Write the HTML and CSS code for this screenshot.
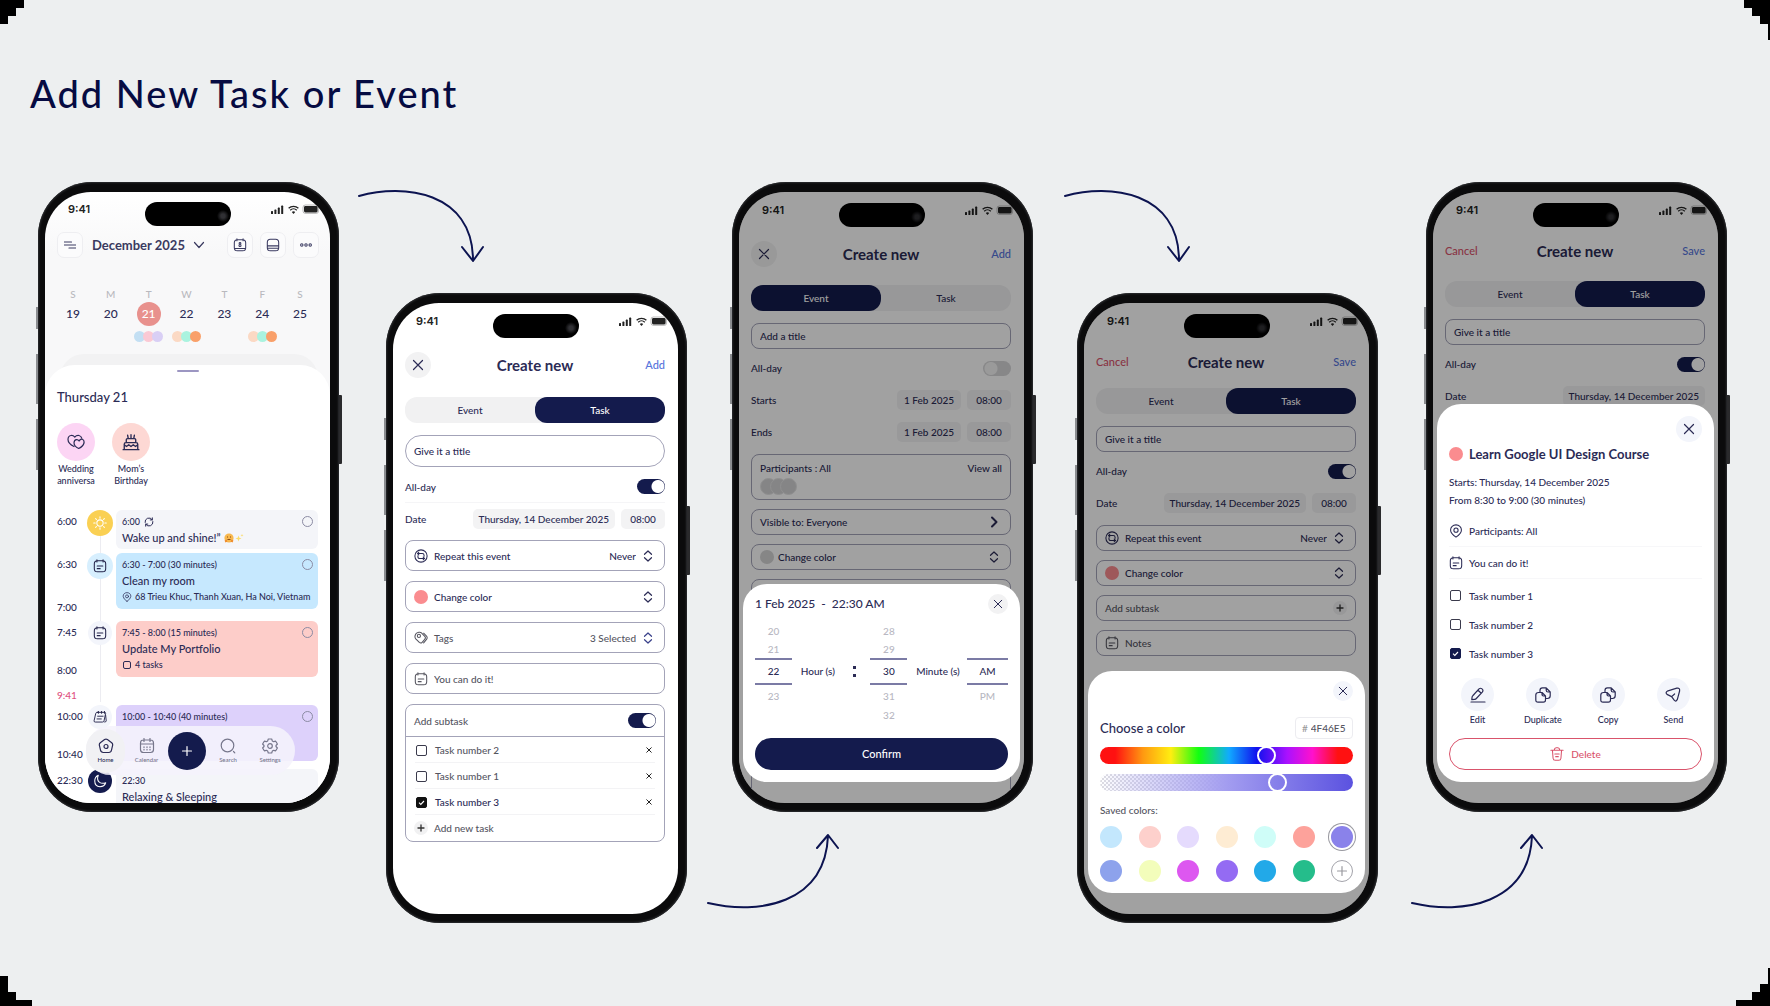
FILE: index.html
```html
<!DOCTYPE html>
<html lang="en">
<head>
<meta charset="utf-8">
<meta name="viewport" content="width=device-width, initial-scale=1">
<title>Add New Task or Event</title>
<link rel="stylesheet" href="styles.css">
</head>
<body>
<svg class="sprite" aria-hidden="true">
  <symbol id="i-status" viewBox="0 0 50 12"><g fill="currentColor"><rect x="0" y="8" width="2" height="3" rx=".6"/><rect x="3.4" y="6.6" width="2" height="4.4" rx=".6"/><rect x="6.8" y="4.6" width="2" height="6.4" rx=".6"/><rect x="10.2" y="2.6" width="2" height="8.4" rx=".6"/><rect x="33" y="3" width="13.6" height="6.4" rx="1.4"/><path d="M22.500 11l1.700-1.900a2.400 2.400 0 0 0-3.400 0z"/></g><g fill="none" stroke="currentColor"><path stroke-width="1.300" d="M17.600 5.300a7 7 0 0 1 9.800 0M19.200 7.300a4.700 4.700 0 0 1 6.600 0"/><rect x="32" y="2" width="15.600" height="8.400" rx="2.400" stroke-width=".6" opacity=".5"/></g></symbol>
  <symbol id="i-x" viewBox="0 0 12 12"><path d="M1.500 1.500l9 9m0-9l-9 9"/></symbol>
  <symbol id="i-plus" viewBox="0 0 12 12"><path d="M6 1.500v9M1.500 6h9"/></symbol>
  <symbol id="i-down" viewBox="0 0 12 12"><path d="M1.500 3.500L6 8.500l4.500-5"/></symbol>
  <symbol id="i-right" viewBox="0 0 12 12"><path d="M4 1.500L8.500 6 4 10.500"/></symbol>
  <symbol id="i-sort" viewBox="0 0 12 12"><path d="M2.500 4.300L6 1l3.500 3.300M2.500 7.700L6 11l3.500-3.300"/></symbol>
  <symbol id="i-note" viewBox="0 0 16 16"><path d="M5 2h6q3.500 0 3.500 3.500v5.500q0 3.500-3.500 3.500H5q-3.500 0-3.500-3.500V5.500Q1.500 2 5 2zM4.500.8v2.600M11.500.8v2.600M4.800 8h6.400M4.800 11h3.400"/></symbol>
  <symbol id="i-journal" viewBox="0 0 18 16"><path d="M5.500 2h9.500q1.500 0 1.200 1.500l-2 9.500q-.3 1.500-2 1.500H3Q1 14.500 1.400 12.800L3.500 3.500Q3.800 2 5.500 2zM7 .8v2.500M11 .8v2.500M14.800.8v2.500M6 7h7M5.200 10.500h5.500M16.300 6l.7 7q0 1.500-2 1.500"/></symbol>
  <symbol id="i-repeat" viewBox="0 0 16 16"><circle cx="8" cy="8" r="7"/><path d="M5.500 3.700L4 5.200l1.500 1.500M4 5.200h5.500q2 0 2 2v1M10.500 12.300l1.500-1.500-1.500-1.500M12 10.800H6.500q-2 0-2-2v-1"/></symbol>
  <symbol id="i-tag" viewBox="0 0 16 16"><path d="M2 3.500Q3 2 5.500 1.500q2-.4 3 .6l3.800 4q1.500 1.700 0 3.300l-3 3.600q-1.500 1.500-3.200 0L2 9Q.8 7.500 1.200 5.500zM11 2.500l3.300 3.400q1.500 1.700 0 3.600L11 13.600"/><circle cx="5.600" cy="5.600" r="1.800"/></symbol>
  <symbol id="i-pin" viewBox="0 0 16 16"><path d="M8 15Q1.800 10.800 1.800 6.800C1.800 3.400 4.500 1 8 1s6.200 2.400 6.200 5.800Q14.200 10.800 8 15z"/><circle cx="8" cy="7" r="2.400"/></symbol>
  <symbol id="i-sync" viewBox="0 0 12 12"><path d="M1.300 6.500a4.700 4.700 0 0 1 8.500-3.300M10 1v2.500H7.500M10.700 5.500a4.700 4.700 0 0 1-8.500 3.300M2 11V8.500h2.500"/></symbol>
  <symbol id="i-menu" viewBox="0 0 12 12"><path d="M.5 3h7M.5 6h11M5 9h6.500"/></symbol>
  <symbol id="i-day" viewBox="0 0 16 16"><path d="M5 2h6q3.500 0 3.500 3.500v5.500q0 3.500-3.500 3.500H5q-3.500 0-3.500-3.500V5.500Q1.500 2 5 2zM4.500.8v2.200M11.500.8v2.200M2 12h12"/><circle cx="8" cy="6.200" r="1"/><circle cx="8" cy="8.600" r="1.200"/></symbol>
  <symbol id="i-panel" viewBox="0 0 16 16"><path d="M5 1.500h6q3.500 0 3.500 3.500v6q0 3.500-3.500 3.500H5q-3.500 0-3.500-3.500V5Q1.500 1.500 5 1.500zM1.500 9h13M2 11.800h12"/></symbol>
  <symbol id="i-dots" viewBox="0 0 16 16"><circle cx="3.200" cy="8" r="1.400"/><circle cx="8" cy="8" r="1.400"/><circle cx="12.800" cy="8" r="1.400"/></symbol>
  <symbol id="i-hearts" viewBox="0 0 18 16"><path d="M7 12.500Q1 9.500 1 5.500 1 2 4 1.500q2.200-.3 3.800 1.600Q9.500 1 12 1.500q2.300.6 2.700 2.700"/><path d="M11.700 14.500Q7 12.500 7 8.800 7.200 6 9.500 5.700q1.700-.1 2.600 1.300Q13.300 4.700 15.300 5.200q2.200.9 1.700 3.800-.8 3.300-5.300 5.500z"/></symbol>
  <symbol id="i-cake" viewBox="0 0 16 16"><path d="M1 14.800h14M2 14.500V10q0-1.500 1.500-1.500h9q1.500 0 1.500 1.500v4.500M3.800 8.200V6q0-1 1-1h6.400q1 0 1 1v2.200M2 10.500l2 1.500 2-1.500 2 1.500 2-1.500 2 1.500 2-1.500M5.500 4.500L5 2M8 4.500v-3M10.500 4.500L11 2"/></symbol>
  <symbol id="i-sun" viewBox="0 0 16 16"><circle cx="8" cy="8" r="3.600"/><path d="M8 .8v1.700M8 13.500v1.700M.8 8h1.700M13.500 8h1.700M3 3l1 1M12 12l1 1M13 3l-1 1M4 12l-1 1"/></symbol>
  <symbol id="i-moon" viewBox="0 0 16 16"><path d="M6 1.500Q4 7 7.500 9.500q3 2 7 .5-1.500 4.500-6.500 4.500-6-.5-6-6.500 0-4.500 4-6.500z"/></symbol>
  <symbol id="i-home" viewBox="0 0 16 16"><path d="M6.600 1.600q1.400-1 2.800 0l4.300 3.200q1.300 1 .9 2.600l-1.100 4.800q-.5 2.300-2.700 2.300H5.200q-2.200 0-2.700-2.300L1.400 7.400Q1 5.800 2.300 4.800z"/><circle cx="8" cy="8.500" r="2"/></symbol>
  <symbol id="i-cal" viewBox="0 0 16 16"><path d="M4.500 2h7q3 0 3 3v6.500q0 3-3 3h-7q-3 0-3-3V5q0-3 3-3zM1.500 6h13M5 .5v3M11 .5v3M5 8.800v.6M8 8.800v.6M11 8.800v.6M5 11.300v.6M8 11.300v.6M11 11.300v.6"/></symbol>
  <symbol id="i-search" viewBox="0 0 16 16"><circle cx="7.500" cy="7.500" r="6.300"/><path d="M13.500 13.500l1.300 1.300"/></symbol>
  <symbol id="i-gear" viewBox="0 0 16 16"><path d="M6.300 1h3.400l.6 1.900 1.400.8 2-.5L15.400 6 14 7.500v1L15.400 10l-1.700 2.800-2-.5-1.400.8-.6 1.900H6.300l-.6-1.900-1.400-.8-2 .5L.6 10 2 8.500v-1L.6 6l1.700-2.800 2 .5 1.400-.8z"/><circle cx="8" cy="8" r="2.300"/></symbol>
  <symbol id="i-edit" viewBox="0 0 16 16"><path d="M3 8.500l6-6.600q1.500-1.300 3 0 1.700 1.500.3 3.200l-6 6.400q-.6.700-1.600.8l-2.900.3.300-2.600q.1-.8.900-1.500zM8 3.200L11 6M1 15h14"/></symbol>
  <symbol id="i-copy" viewBox="0 0 16 16"><path d="M3.500 5.500H7L10.500 9v4q0 2.200-2.200 2.200H3Q.8 15.200.8 13V8q0-2.500 2.700-2.500zM7 5.500V7.500Q7 9 8.500 9h2M5 5.500V3.200Q5 .8 7.400.8h3.800L15.200 5v3.800q0 2.700-2.700 2.700h-2M11.200.8v2.400Q11.200 5 13 5h2.200"/></symbol>
  <symbol id="i-send" viewBox="0 0 16 16"><path d="M3 3.800l8.800-2.600q3.400-.6 2.800 2.800L12.300 12.600q-1.300 2.700-3.100.6L6.600 9.600 2 7.400Q-.2 5.400 3 3.800zM6.600 9.600l3-2.600"/></symbol>
  <symbol id="i-trash" viewBox="0 0 16 16"><path d="M1 3.800h14M2.800 3.800l.7 9q.2 2.400 2.500 2.400h4q2.300 0 2.500-2.400l.7-9M4.800 3.500Q5.200.8 7 .8h2q1.800 0 2.200 2.700M5.500 8h5M6.500 11h3"/></symbol>
  <symbol id="i-curve-down" viewBox="0 0 128 76"><path d="M1 10C46-3 114 6 115 73M104 61l11 14 10-14"/></symbol>
  <symbol id="i-curve-up" viewBox="0 0 134 76"><path d="M1 70C52 82 118 71 121 3M110 15L121 2l10 13"/></symbol>
</svg>
<svg class="corner corner-tl" width="24" height="24" aria-hidden="true"><path d="M0 0h24v8h-8v8H8v8H0z"/></svg>
<svg class="corner corner-tr" width="26" height="40" aria-hidden="true"><path d="M0 0h26v40h-2V24h-8v-8H8V8H0z"/></svg>
<svg class="corner corner-bl" width="32" height="30" aria-hidden="true"><path d="M0 0h8v16h8v8h16v6H0z"/></svg>
<svg class="corner corner-br" width="34" height="38" aria-hidden="true"><path d="M32 0h2v38H0v-6h16v-8h8v-8h8z"/></svg>

<main class="board">
  <h1 class="board-title">Add New Task or Event</h1>
  <div class="flow">

    <section class="phone" aria-label="Day view">
      <div class="screen screen-home">
        <div class="status"><span class="clock">9:41</span><span class="island"></span><svg class="status-icons"><use href="#i-status"/></svg></div>
        <header class="month-bar">
          <button class="tool" aria-label="Menu"><svg class="icon s12"><use href="#i-menu"/></svg></button>
          <button class="month">December 2025 <svg class="icon s12"><use href="#i-down"/></svg></button>
          <button class="tool" aria-label="Today"><svg class="icon s14"><use href="#i-day"/></svg></button>
          <button class="tool" aria-label="Panel"><svg class="icon s14"><use href="#i-panel"/></svg></button>
          <button class="tool" aria-label="More"><svg class="icon s14"><use href="#i-dots"/></svg></button>
        </header>
        <div class="week">
          <div class="day"><span class="dow">S</span><span class="num">19</span></div>
          <div class="day"><span class="dow">M</span><span class="num">20</span></div>
          <div class="day"><span class="dow">T</span><span class="num today">21</span><span class="dots"><i class="c-sky"></i><i class="c-rose"></i><i class="c-lilac"></i></span></div>
          <div class="day"><span class="dow">W</span><span class="num">22</span><span class="dots"><i class="c-peach"></i><i class="c-mint"></i><i class="c-orange"></i></span></div>
          <div class="day"><span class="dow">T</span><span class="num">23</span></div>
          <div class="day"><span class="dow">F</span><span class="num">24</span><span class="dots"><i class="c-peach"></i><i class="c-mint"></i><i class="c-orange"></i></span></div>
          <div class="day"><span class="dow">S</span><span class="num">25</span></div>
        </div>
        <div class="sheet-back"></div>
        <div class="sheet">
          <div class="handle"></div>
          <h2 class="sheet-title">Thursday 21</h2>
          <div class="stories">
            <div class="story"><span class="story-pic pink"><svg class="icon s18"><use href="#i-hearts"/></svg></span>Wedding anniversa</div>
            <div class="story"><span class="story-pic rose"><svg class="icon s18"><use href="#i-cake"/></svg></span>Mom’s Birthday</div>
          </div>
          <div class="timeline">
            <div class="entry">
              <div class="times"><span>6:00</span></div>
              <span class="badge sun"><svg class="icon s14"><use href="#i-sun"/></svg></span>
              <article class="card gray short"><p class="when">6:00 <svg class="icon s10"><use href="#i-sync"/></svg></p><h3>Wake up and shine!” <svg class="emoji" viewBox="0 0 20 10"><circle cx="5" cy="5" r="4.600" fill="#f8b84e"/><path d="M3 4h1M6 4h1M3.500 6.500h3" stroke="#8a4b14" fill="none"/><path d="M1 8.500l2-1M9 8.500l-2-1" stroke="#ee8c2c" stroke-width="2"/><path d="M14.500 2.500l.8 2.200 2.200.8-2.200.8-.8 2.200-.8-2.200-2.200-.8 2.200-.8zM18 .8l.4 1.100 1.100.4-1.100.4L18 3.800l-.4-1.100-1.100-.4 1.100-.4z" fill="#fbdc6a"/></svg></h3><input type="radio" class="ring" aria-label="Mark done"></article>
            </div>
            <div class="entry">
              <div class="times"><span>6:30</span><span>7:00</span></div>
              <span class="badge blue"><svg class="icon s14"><use href="#i-note"/></svg></span>
              <article class="card blue"><p class="when">6:30 - 7:00 (30 minutes)</p><h3>Clean my room</h3><p class="meta"><svg class="icon s10"><use href="#i-pin"/></svg>68 Trieu Khuc, Thanh Xuan, Ha Noi, Vietnam</p><input type="radio" class="ring" aria-label="Mark done"></article>
            </div>
            <div class="entry after-break">
              <div class="times"><span>7:45</span><span class="mid">8:00</span></div>
              <span class="badge gray"><svg class="icon s14"><use href="#i-note"/></svg></span>
              <article class="card rose"><p class="when">7:45 - 8:00 (15 minutes)</p><h3>Update My Portfolio</h3><p class="meta"><i class="mini-box"></i>4 tasks</p><input type="radio" class="ring" aria-label="Mark done"></article>
            </div>
            <div class="now">9:41</div>
            <div class="entry">
              <div class="times"><span>10:00</span><span class="mid">10:40</span></div>
              <span class="badge gray"><svg class="icon s14"><use href="#i-journal"/></svg></span>
              <article class="card lilac"><p class="when">10:00 - 10:40 (40 minutes)</p><input type="radio" class="ring" aria-label="Mark done"></article>
            </div>
            <div class="entry last">
              <div class="times"><span>22:30</span></div>
              <span class="badge navy"><svg class="icon s14"><use href="#i-moon"/></svg></span>
              <article class="card gray"><p class="when">22:30</p><h3>Relaxing &amp; Sleeping</h3></article>
            </div>
          </div>
        </div>
        <nav class="tabs">
          <a href="#home" class="tab active"><svg class="icon s16"><use href="#i-home"/></svg>Home</a>
          <a href="#calendar" class="tab"><svg class="icon s16"><use href="#i-cal"/></svg>Calendar</a>
          <button class="fab" aria-label="Add"><svg class="icon s12"><use href="#i-plus"/></svg></button>
          <a href="#search" class="tab"><svg class="icon s16"><use href="#i-search"/></svg>Search</a>
          <a href="#settings" class="tab"><svg class="icon s16"><use href="#i-gear"/></svg>Settings</a>
        </nav>
      </div>
      <svg class="arrow arrow-down" aria-hidden="true"><use href="#i-curve-down"/></svg>
    </section>

    <section class="phone low" aria-label="Create task">
      <div class="screen roomy">
        <div class="status"><span class="clock">9:41</span><span class="island"></span><svg class="status-icons"><use href="#i-status"/></svg></div>
        <div class="form">
          <header class="form-head"><button class="round" aria-label="Close"><svg class="icon s12"><use href="#i-x"/></svg></button><h2>Create new</h2><button class="text-btn">Add</button></header>
          <div class="segment"><button>Event</button><button class="on">Task</button></div>
          <input class="box title-box" type="text" value="Give it a title" aria-label="Title">
          <div class="lines">
            <div class="line ruled"><label for="allday2">All-day</label><input id="allday2" type="checkbox" class="toggle" checked></div>
            <div class="line"><span>Date</span><span class="chips"><button class="chip">Thursday, 14 December 2025</button><button class="chip">08:00</button></span></div>
          </div>
          <div class="stack">
            <div class="box"><svg class="icon s14"><use href="#i-repeat"/></svg><label for="repeat2">Repeat this event</label><select id="repeat2"><option>Never</option></select><svg class="icon s12"><use href="#i-sort"/></svg></div>
            <button class="box"><i class="swatch-dot"></i><span>Change color</span><svg class="icon s12 end"><use href="#i-sort"/></svg></button>
            <div class="box grey"><svg class="icon s14"><use href="#i-tag"/></svg><label for="tags2">Tags</label><select id="tags2"><option>3 Selected</option></select><svg class="icon s12 ink"><use href="#i-sort"/></svg></div>
            <label class="box grey"><svg class="icon s14"><use href="#i-note"/></svg><input type="text" value="You can do it!" aria-label="Notes"></label>
            <div class="group">
              <div class="group-head"><label for="sub2">Add subtask</label><input id="sub2" type="checkbox" class="toggle" checked></div>
              <div class="todo"><input type="checkbox" class="tick" id="t2"><label for="t2">Task number 2</label><button aria-label="Remove"><svg class="icon s6 bold"><use href="#i-x"/></svg></button></div>
              <div class="todo"><input type="checkbox" class="tick" id="t1"><label for="t1">Task number 1</label><button aria-label="Remove"><svg class="icon s6 bold"><use href="#i-x"/></svg></button></div>
              <div class="todo done"><input type="checkbox" class="tick" id="t3" checked><label for="t3">Task number 3</label><button aria-label="Remove"><svg class="icon s6 bold"><use href="#i-x"/></svg></button></div>
              <button class="todo"><span class="add-dot"><svg class="icon s8 bold"><use href="#i-plus"/></svg></span>Add new task</button>
            </div>
          </div>
        </div>
      </div>
      <svg class="arrow arrow-up" aria-hidden="true"><use href="#i-curve-up"/></svg>
    </section>

    <section class="phone" aria-label="Pick time">
      <div class="screen">
        <div class="status"><span class="clock">9:41</span><span class="island"></span><svg class="status-icons"><use href="#i-status"/></svg></div>
        <div class="form">
          <header class="form-head"><button class="round" aria-label="Close"><svg class="icon s12"><use href="#i-x"/></svg></button><h2>Create new</h2><button class="text-btn">Add</button></header>
          <div class="segment"><button class="on">Event</button><button>Task</button></div>
          <input class="box title-box" type="text" value="Add a title" aria-label="Title">
          <div class="lines">
            <div class="line"><label for="allday3">All-day</label><input id="allday3" type="checkbox" class="toggle"></div>
            <div class="line"><span>Starts</span><span class="chips"><button class="chip wide">1 Feb 2025</button><button class="chip">08:00</button></span></div>
            <div class="line"><span>Ends</span><span class="chips"><button class="chip wide">1 Feb 2025</button><button class="chip">08:00</button></span></div>
          </div>
          <div class="stack">
            <div class="box people"><span>Participants : All</span><button class="end">View all</button><span class="faces"><i></i><i></i><i></i></span></div>
            <button class="box"><span>Visible to: Everyone</span><svg class="icon s12 end bold"><use href="#i-right"/></svg></button>
            <button class="box snug"><i class="swatch-dot none"></i><span>Change color</span><svg class="icon s12 end"><use href="#i-sort"/></svg></button>
            <div class="box tall"></div>
          </div>
        </div>
        <div class="scrim"></div>
        <div class="modal time-modal" role="dialog" aria-label="Pick a time">
          <div class="modal-head"><h3>1 Feb 2025 &nbsp;- &nbsp;22:30 AM</h3><button class="round small" aria-label="Close"><svg class="icon s10"><use href="#i-x"/></svg></button></div>
          <div class="wheels">
            <div class="wheel"><span>20</span><span>21</span><b>22</b><span>23</span></div>
            <span class="unit">Hour (s)</span>
            <span class="colon"></span>
            <div class="wheel"><span>28</span><span>29</span><b>30</b><span>31</span><span>32</span></div>
            <span class="unit">Minute (s)</span>
            <div class="wheel"><span></span><span></span><b>AM</b><span>PM</span></div>
          </div>
          <button class="primary">Confirm</button>
        </div>
      </div>
      <svg class="arrow arrow-down far" aria-hidden="true"><use href="#i-curve-down"/></svg>
    </section>

    <section class="phone low" aria-label="Pick color">
      <div class="screen">
        <div class="status"><span class="clock">9:41</span><span class="island"></span><svg class="status-icons"><use href="#i-status"/></svg></div>
        <div class="form">
          <header class="form-head compact"><button class="text-btn danger">Cancel</button><h2>Create new</h2><button class="text-btn">Save</button></header>
          <div class="segment"><button>Event</button><button class="on">Task</button></div>
          <input class="box title-box" type="text" value="Give it a title" aria-label="Title">
          <div class="lines">
            <div class="line"><label for="allday4">All-day</label><input id="allday4" type="checkbox" class="toggle" checked></div>
            <div class="line"><span>Date</span><span class="chips"><button class="chip">Thursday, 14 December 2025</button><button class="chip">08:00</button></span></div>
          </div>
          <div class="stack">
            <div class="box"><svg class="icon s14"><use href="#i-repeat"/></svg><label for="repeat4">Repeat this event</label><select id="repeat4"><option>Never</option></select><svg class="icon s12"><use href="#i-sort"/></svg></div>
            <button class="box"><i class="swatch-dot"></i><span>Change color</span><svg class="icon s12 end"><use href="#i-sort"/></svg></button>
            <button class="box grey"><span>Add subtask</span><span class="add-dot end"><svg class="icon s8 bold"><use href="#i-plus"/></svg></span></button>
            <label class="box grey"><svg class="icon s14"><use href="#i-note"/></svg><input type="text" value="Notes" aria-label="Notes"></label>
          </div>
        </div>
        <div class="scrim"></div>
        <div class="modal color-modal" role="dialog" aria-label="Choose a color">
          <div class="modal-head"><button class="round small cool" aria-label="Close"><svg class="icon s10"><use href="#i-x"/></svg></button></div>
          <div class="color-head"><h3>Choose a color</h3><label class="hex">#<input type="text" value="4F46E5" aria-label="Hex value"></label></div>
          <input type="range" class="slider hue" min="0" max="100" value="67" aria-label="Hue">
          <input type="range" class="slider alpha" min="0" max="100" value="72" aria-label="Opacity">
          <p class="saved-label">Saved colors:</p>
          <div class="saved">
            <button style="background:#c3e7fd" aria-label="Sky"></button><button style="background:#fdd0cc" aria-label="Rose"></button><button style="background:#e5dbfd" aria-label="Lilac"></button><button style="background:#feecd3" aria-label="Cream"></button><button style="background:#cffdf8" aria-label="Mint"></button><button style="background:#fda29b" aria-label="Coral"></button><button class="picked" style="background:#8a82ea" aria-label="Iris"></button>
            <button style="background:#8da2ec" aria-label="Blue"></button><button style="background:#f3fdbb" aria-label="Lime"></button><button style="background:#dd57f0" aria-label="Magenta"></button><button style="background:#946bf3" aria-label="Violet"></button><button style="background:#22a9e8" aria-label="Azure"></button><button style="background:#25bd8b" aria-label="Green"></button><button class="more" aria-label="Add color"><svg class="icon s12"><use href="#i-plus"/></svg></button>
          </div>
        </div>
      </div>
      <svg class="arrow arrow-up far" aria-hidden="true"><use href="#i-curve-up"/></svg>
    </section>

    <section class="phone" aria-label="Task details">
      <div class="screen">
        <div class="status"><span class="clock">9:41</span><span class="island"></span><svg class="status-icons"><use href="#i-status"/></svg></div>
        <div class="form">
          <header class="form-head compact spaced"><button class="text-btn danger">Cancel</button><h2>Create new</h2><button class="text-btn">Save</button></header>
          <div class="segment"><button>Event</button><button class="on">Task</button></div>
          <input class="box title-box" type="text" value="Give it a title" aria-label="Title">
          <div class="lines">
            <div class="line"><label for="allday5">All-day</label><input id="allday5" type="checkbox" class="toggle" checked></div>
            <div class="line"><span>Date</span><span class="chips"><button class="chip">Thursday, 14 December 2025</button></span></div>
          </div>
        </div>
        <div class="scrim"></div>
        <div class="modal task-modal" role="dialog" aria-label="Task">
          <div class="modal-head"><button class="round cool" aria-label="Close"><svg class="icon s12"><use href="#i-x"/></svg></button></div>
          <h3 class="task-title"><i class="swatch-dot"></i>Learn Google UI Design Course</h3>
          <p class="task-time">Starts: Thursday, 14 December 2025<br>From 8:30 to 9:00 (30 minutes)</p>
          <div class="fact"><svg class="icon s14"><use href="#i-pin"/></svg>Participants: All</div>
          <div class="fact"><svg class="icon s14"><use href="#i-note"/></svg>You can do it!</div>
          <div class="check-row"><input type="checkbox" class="tick" id="d1"><label for="d1">Task number 1</label></div>
          <div class="check-row"><input type="checkbox" class="tick" id="d2"><label for="d2">Task number 2</label></div>
          <div class="check-row"><input type="checkbox" class="tick" id="d3" checked><label for="d3">Task number 3</label></div>
          <div class="actions">
            <button><span><svg class="icon s16"><use href="#i-edit"/></svg></span>Edit</button>
            <button><span><svg class="icon s16"><use href="#i-copy"/></svg></span>Duplicate</button>
            <button><span><svg class="icon s16"><use href="#i-copy"/></svg></span>Copy</button>
            <button><span><svg class="icon s16"><use href="#i-send"/></svg></span>Send</button>
          </div>
          <button class="delete"><svg class="icon s14"><use href="#i-trash"/></svg>Delete</button>
        </div>
      </div>
    </section>

  </div>
</main>
</body>
</html>
```
FILE: styles.css
```css
:root {
  --navy: #141b4d;
  --ink: #2b2b55;
  --line: #a3a3b8;
  --field: #f3f3f4;
  --cool: #f3f5fb;
  --danger: #d9536b;
}
* { box-sizing: border-box; }
body { margin: 0; background: #edeff0; color: var(--ink); font: 500 10px/16px Lato, "Liberation Sans", sans-serif; }
h1, h2, h3, p { margin: 0; font-weight: inherit; }
button, input, select { font: inherit; color: inherit; margin: 0; padding: 0; border: 0; background: none; }
button { cursor: pointer; white-space: nowrap; }
input[type="text"] { min-width: 0; flex: 1; outline: 0; }
i { display: block; }

.sprite { position: absolute; width: 0; height: 0; }
.icon { display: block; flex: none; fill: none; stroke: currentColor; stroke-width: 1.2; stroke-linecap: round; stroke-linejoin: round; }
.s6 { width: 6px; height: 6px; }
.s8 { width: 8px; height: 8px; }
.s10 { width: 10px; height: 10px; }
.s12 { width: 12px; height: 12px; }
.s14 { width: 14px; height: 14px; }
.s16 { width: 16px; height: 16px; }
.s18 { width: 18px; height: 18px; }
.end { margin-left: auto; }
.bold { stroke-width: 2; }

.corner { position: absolute; display: block; }
.corner-tl { top: 0; left: 0; }
.corner-tr { top: 0; right: 0; }
.corner-bl { bottom: 0; left: 0; }
.corner-br { bottom: 0; right: 0; }

.board { min-height: 100vh; padding: 70px 43px 82px 38px; }
.board-title { margin: 0 0 66px -8px; color: #060b42; font-size: 38px; line-height: 46px; letter-spacing: 2px; }
.flow { display: grid; grid-template-columns: 301px 47fr 301px 45fr 301px 44fr 301px 48fr 301px; align-items: start; }

/* Device */
.phone { position: relative; aspect-ratio: 301 / 630; min-height: 0; padding: 10px 9px 9px 7px; border-radius: 54px; background: #0b0b0c; box-shadow: inset 0 0 2px 1px #2c2d30; }
.phone:nth-child(1) { grid-column: 1; }
.phone:nth-child(2) { grid-column: 3; }
.phone:nth-child(3) { grid-column: 5; }
.phone:nth-child(4) { grid-column: 7; }
.phone:nth-child(5) { grid-column: 9; }
.phone.low { margin-top: 111px; }
.phone::before { content: ""; position: absolute; z-index: -1; right: -3px; top: 213px; width: 6px; height: 69px; border-radius: 1px; background: #2a2a2c; }
.phone::after { content: ""; position: absolute; z-index: -1; left: -2px; top: 125px; width: 4px; height: 163px; background: linear-gradient(#8b8d90 0 22px, transparent 22px 47px, #8b8d90 47px 97px, transparent 97px 112px, #8b8d90 112px); }
.screen { position: relative; height: 100%; overflow: hidden; border-radius: 46px; background: #fff; }
.status { display: grid; grid-template-columns: 100px 86px 1fr; align-items: center; height: 36px; color: #222; }
.clock { padding-left: 23px; font: 600 11px/14px Inter, "Liberation Sans", sans-serif; }
.island { height: 24px; margin-top: 10px; border-radius: 12px; background: radial-gradient(circle at 78px 14px, #303034 0 2px, #000 6px); }
.status-icons { justify-self: end; width: 50px; height: 12px; margin-right: 9px; }
.arrow { position: absolute; height: 76px; fill: none; stroke: #0c1350; stroke-width: 2; stroke-linecap: round; stroke-linejoin: round; }
.arrow-down { left: 320px; top: 4px; width: 128px; }
.arrow-up { left: 321px; top: 540px; width: 134px; }
.far { left: 332px; }
.arrow-up.far { left: 334px; }

/* Day view */
.screen-home { display: flex; flex-direction: column; background: linear-gradient(#fff, #f8f8f9 60px); }
.month-bar { display: flex; align-items: center; gap: 7px; margin: 6px 11px 0 12px; color: #3a3a60; }
.tool { display: grid; place-items: center; width: 26px; height: 26px; border: 1px solid #eeeef1; border-radius: 7px; background: #fbfbfc; }
.month { display: flex; align-items: center; gap: 8px; margin-right: auto; padding-left: 2px; font-size: 13px; font-weight: 700; }
.week { display: grid; grid-template-columns: repeat(7, 1fr); margin: 30px 11px 0 9px; }
.day { display: grid; grid-template-rows: 12px 24px 10px; row-gap: 2px; justify-items: center; align-items: center; }
.dow { color: #b9b9be; font-size: 10px; line-height: 12px; }
.num { width: 24px; height: 24px; border-radius: 50%; font-size: 12px; line-height: 24px; text-align: center; }
.today { background: #e8918d; color: #fff; }
.dots { display: flex; margin-top: 6px; }
.dots i { width: 11px; height: 11px; margin: 0 -1px; border-radius: 50%; }
.c-sky { background: #c3dff3; }
.c-rose { background: #fbc9d4; }
.c-lilac { background: #d9cff5; }
.c-peach { background: #fbd9c4; }
.c-mint { background: #aaf3df; }
.c-orange { background: #f9a06a; }
.sheet-back { flex: none; height: 24px; margin: 16px 12px -13px 15px; border-radius: 24px 24px 0 0; background: #f2f2f3; }
.sheet { flex: 1; padding: 5px 12px 0; border-radius: 30px 30px 0 0; background: #fff; }
.handle { width: 22px; height: 2px; margin: 0 auto; border-radius: 1px; background: #9c96c2; }
.sheet-title { margin-top: 16px; font-size: 13px; line-height: 18px; }
.stories { display: flex; gap: 17px; margin-top: 17px; }
.story { width: 38px; font-size: 9px; line-height: 12px; text-align: center; }
.story-pic { display: grid; place-items: center; height: 38px; margin-bottom: 2px; border-radius: 50%; }
.story-pic.pink { background: #fcd5f4; }
.story-pic.rose { background: #fdd8d4; }
.timeline { position: relative; margin-top: 23px; line-height: 12px; }
.timeline::before { content: ""; position: absolute; left: 43px; top: 20px; width: 1px; height: 172px; background: #ececf1; }
.entry { position: relative; display: grid; grid-template-columns: 27px 26px 1fr; column-gap: 3px; margin-bottom: 4px; }
.entry.after-break { margin-top: 12px; margin-bottom: 0; }
.times { display: flex; flex-direction: column; justify-content: space-between; padding-top: 5px; white-space: nowrap; }
.times span + span { margin-bottom: -4px; }
.times span + .mid { margin-bottom: 1px; }
.badge { display: grid; place-items: center; justify-self: center; width: 24px; height: 24px; border-radius: 50%; color: #23234a; background: var(--cool); }
.badge.sun { width: 26px; height: 26px; background: #fad053; color: #fff; }
.badge.blue { width: 26px; height: 26px; background: #d7effe; }
.badge.navy { background: var(--navy); color: #fff; }
.card { position: relative; min-height: 56px; padding: 6px; border-radius: 6px; }
.card.short { min-height: 39px; padding-bottom: 1px; }
.card.gray { background: #f4f5f9; }
.card.blue { background: #c6e8fe; }
.card.rose { background: #fdcdc9; }
.card.lilac { background: #ddd1fb; }
.card h3 { display: flex; align-items: center; gap: 3px; margin: 2px 0; font-size: 11px; line-height: 16px; white-space: nowrap; }
.when, .meta { display: flex; align-items: center; gap: 4px; font-size: 9px; line-height: 12px; white-space: nowrap; }
.meta { gap: 3px; }
.emoji { width: 20px; height: 10px; }
.mini-box { width: 8px; height: 8px; margin: 0 1px; border: 1px solid var(--ink); border-radius: 2px; }
.ring { appearance: none; position: absolute; right: 5px; top: 6px; width: 11px; height: 11px; border: 1px solid #8b8ba3; border-radius: 50%; }
.now { height: 28px; padding-top: 12px; color: #e0527f; }
.last { margin-top: 8px; }
.tabs { position: absolute; left: 41px; right: 35px; bottom: 28px; display: grid; grid-template-columns: 39px 43px 39px 42px 42px; align-items: center; height: 49px; border-radius: 25px; background: rgba(245, 243, 252, .88); color: #77778c; font-size: 6px; line-height: 8px; }
.tab { display: grid; justify-items: center; gap: 2px; color: inherit; text-decoration: none; }
.tab.active { color: var(--ink); height: 44px; align-content: center; border-radius: 22px; background: #f1f1f4; }
.fab { display: grid; place-items: center; width: 38px; height: 38px; border-radius: 50%; background: var(--navy); color: #fff; }

/* Create form */
.form { padding: 0 13px 0 12px; }
.form-head { display: grid; grid-template-columns: 1fr auto 1fr; align-items: center; height: 52px; margin-bottom: 5px; }
.form-head h2 { font-size: 15px; font-weight: 700; line-height: 18px; }
.form-head.compact { height: 45px; margin-bottom: 4px; }
.form-head.spaced { margin-bottom: 8px; }
.roomy .form-head { margin-bottom: 6px; }
.round { display: grid; place-items: center; width: 26px; height: 26px; border-radius: 50%; background: #f2f2f3; }
.round.small { width: 20px; height: 20px; }
.round.cool { background: var(--cool); }
.text-btn { justify-self: end; color: #5674dc; font-size: 11px; }
.text-btn.danger { justify-self: start; color: var(--danger); }
.segment { display: grid; grid-template-columns: 1fr 1fr; height: 26px; margin-bottom: 12px; border-radius: 12px; background: #f1f1f2; }
.segment button { border-radius: 12px; }
.segment .on { background: var(--navy); color: #fff; }
.box { display: flex; align-items: center; gap: 6px; width: 100%; height: 26px; padding: 0 8px; border: 1px solid var(--line); border-radius: 8px; text-align: left; }
.box select { margin-left: auto; appearance: none; text-align-last: right; }
.box .s12 { margin-right: 2px; }
.grey { color: #55555f; }
.ink { color: #39408a; }
.roomy .stack { gap: 10px; }
.roomy .box { height: 31px; }
.roomy .title-box { height: 32px; border-radius: 16px; }
.roomy .lines { margin: 4px 0 5px; }
.lines { margin: 3px 0 6px; }
.line { display: flex; align-items: center; justify-content: space-between; height: 32px; }
.ruled { border-bottom: 1px solid #f5f5f7; }
.toggle { appearance: none; display: block; width: 28px; height: 15px; border-radius: 8px; background: radial-gradient(circle at 8px 50%, #f4f4f4 0 6px, transparent 7px) #d6d6d8; }
.toggle:checked { background: radial-gradient(circle at 21px 50%, #fff 0 6px, transparent 7px) var(--navy); }
.chips { display: flex; gap: 6px; }
.chip { height: 20px; padding: 0 6px; border-radius: 5px; background: var(--field); }
.chip.wide { width: 64px; }
.chip + .chip { width: 44px; }
.stack { display: grid; gap: 9px; }
.swatch-dot { flex: none; width: 14px; height: 14px; border-radius: 50%; background: #fa8c8f; }
.swatch-dot.none { background: #d4d4d5; }
.snug { gap: 4px; }
.people { flex-wrap: wrap; align-content: center; height: 46px; gap: 2px; }
.faces { display: flex; width: 100%; }
.faces i { width: 17px; height: 17px; margin-right: -7px; border: 1px solid #e3e3e4; border-radius: 50%; background: #d3d3d4; }
.tall { height: 240px; }
.group { border: 1px solid var(--line); border-radius: 8px; color: #55555f; }
.group-head { display: flex; align-items: center; justify-content: space-between; height: 32px; padding: 0 8px; border-bottom: 1px solid var(--line); }
.todo { position: relative; display: flex; align-items: center; gap: 8px; width: 100%; height: 26px; padding: 0 9px 0 10px; text-align: left; }
.todo:not(:last-child)::after { content: ""; position: absolute; left: 9px; right: 9px; bottom: 0; border-bottom: 1px solid #f3f3f5; }
.todo > button { margin-left: auto; padding-right: 3px; color: #222; }
.todo.done { color: var(--ink); }
.tick { appearance: none; flex: none; width: 11px; height: 11px; border: 1px solid #3a3a4c; border-radius: 2px; }
.tick:checked { border-color: #111; background: #111 url("data:image/svg+xml,%3Csvg xmlns='http://www.w3.org/2000/svg' viewBox='0 0 9 9'%3E%3Cpath d='M2 4.700l1.800 1.700L7 3' fill='none' stroke='%23fff' stroke-width='1.100'/%3E%3C/svg%3E") center / 9px 9px no-repeat; }
.add-dot { display: grid; place-items: center; width: 14px; height: 14px; border-radius: 50%; background: #f1f1f2; color: #333; }
.todo .add-dot { margin: 0 -2px; }

/* Dialogs */
.scrim { position: absolute; inset: 0; background: rgba(0, 0, 0, .37); }
.modal { position: absolute; left: 4px; right: 4px; bottom: 21px; padding: 10px 12px 12px; border-radius: 24px; background: #fff; }
.modal-head { display: flex; align-items: center; justify-content: space-between; }
.modal-head h3 { font-size: 12px; }
.color-modal .modal-head, .task-modal .modal-head { justify-content: flex-end; }
.wheels { display: grid; grid-template-columns: 37px 44px 26px 37px 54px 41px; justify-content: space-between; margin-top: 8px; }
.wheel { display: grid; grid-template-rows: 18px 18px 27px 22px 16px; align-items: center; text-align: center; color: #b8b8c2; line-height: 16px; }
.wheel b { border: solid #7b7ba5; border-width: 2px 0; color: var(--ink); font-weight: 500; line-height: 23px; }
.unit { padding: 36px 0 0 6px; line-height: 27px; white-space: nowrap; }
.colon { justify-self: center; width: 3px; height: 11px; margin-top: 44px; background: linear-gradient(var(--ink) 3px, transparent 3px 8px, var(--ink) 8px); }
.primary { width: 100%; height: 32px; margin-top: 15px; border-radius: 16px; background: var(--navy); color: #fff; font-size: 11px; }
.color-modal { padding-bottom: 11px; }
.color-head { display: flex; align-items: center; justify-content: space-between; margin-top: 16px; }
.color-head h3 { font-size: 13px; }
.hex { display: flex; gap: 3px; align-items: center; width: 58px; height: 22px; padding: 0 6px; border: 1px solid #ececf0; border-radius: 4px; color: #999; }
.hex input { color: #55555f; }
.slider { appearance: none; display: block; width: 100%; height: 17px; border-radius: 9px; }
.slider::-webkit-slider-thumb { appearance: none; width: 19px; height: 19px; border: 2px solid #fff; border-radius: 50%; background: transparent; }
.hue { margin-top: 8px; background: linear-gradient(90deg, #f11 6%, #f91 17%, #fe1 28%, #1f1 39%, #1af 51%, #11e 62%, #a1f 74%, #f1c 84%, #f11 94%); }
.alpha { margin-top: 10px; background: linear-gradient(90deg, transparent, #a39df0 50%, #5b52e0), repeating-conic-gradient(#dcdce2 0 25%, #fff 0 50%) 0 0 / 4px 4px; }
.saved-label { margin-top: 12px; color: #55555f; line-height: 14px; }
.saved { display: grid; grid-template-columns: repeat(7, 22px); justify-content: space-between; row-gap: 12px; margin-top: 9px; }
.saved button { display: grid; place-items: center; height: 22px; border-radius: 50%; }
.saved .picked { box-shadow: 0 0 0 2px #fff, 0 0 0 3px #98989f; }
.saved .more { border: 1px solid #a3a3aa; color: #99999f; }
.task-modal { padding-top: 12px; }
.task-title { display: flex; align-items: center; gap: 6px; margin-top: 3px; font-size: 13px; font-weight: 700; line-height: 18px; white-space: nowrap; }
.task-time { margin-top: 10px; line-height: 18px; }
.fact { display: flex; align-items: center; gap: 6px; height: 32px; border-bottom: 1px solid #f7f7f9; }
.task-time + .fact { margin-top: 6px; }
.fact + .check-row { margin-top: 2px; }
.check-row { display: flex; align-items: center; gap: 8px; height: 29px; padding-left: 1px; }
.task-modal .tick:checked { border-color: var(--navy); background-color: var(--navy); }
.actions { display: grid; grid-template-columns: repeat(4, 1fr); margin: 10px -4px 0; font-size: 9px; line-height: 12px; }
.actions button { display: grid; justify-items: center; gap: 3px; }
.actions span { display: grid; place-items: center; width: 33px; height: 33px; border-radius: 50%; background: var(--cool); }
.delete { display: flex; align-items: center; justify-content: center; gap: 7px; width: 100%; height: 32px; margin-top: 12px; border: 1px solid var(--danger); border-radius: 16px; color: var(--danger); }
```
